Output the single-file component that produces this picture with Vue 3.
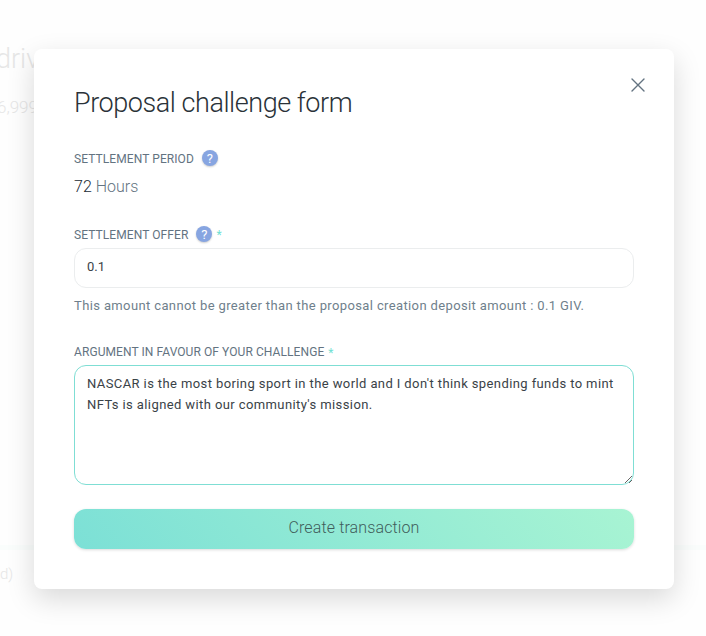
<script setup>
import { ref } from 'vue'

const offer = ref('0.1')
const argument = ref(
  "NASCAR is the most boring sport in the world and I don't think spending funds to mint NFTs is aligned with our community's mission."
)
</script>

<template>
  <div class="page">
    <div class="behind behind-title">driv</div>
    <div class="behind behind-amount">6,999</div>
    <div class="behind-line"></div>
    <div class="behind behind-note">d)</div>

    <section class="modal" role="dialog">
      <button class="close" aria-label="Close">
        <svg width="14" height="14" viewBox="0 0 14 14">
          <path d="M1 1L13 13M13 1L1 13" fill="none" stroke="#637381" stroke-width="1.4" stroke-linecap="round" />
        </svg>
      </button>

      <h1>Proposal challenge form</h1>

      <div class="label period-label">
        <span class="caption">SETTLEMENT PERIOD</span>
        <span class="help">?</span>
      </div>
      <div class="period"><b>72</b> Hours</div>

      <div class="label offer-label">
        <span class="caption">SETTLEMENT OFFER</span>
        <span class="help">?</span>
        <span class="star">*</span>
      </div>
      <input v-model="offer" class="field" type="text" />
      <p class="hint">This amount cannot be greater than the proposal creation deposit amount : 0.1 GIV.</p>

      <div class="label argument-label">
        <span>ARGUMENT IN FAVOUR OF YOUR CHALLENGE</span>
        <span class="star">*</span>
      </div>
      <textarea v-model="argument" class="field area" spellcheck="false"></textarea>

      <button class="submit">Create transaction</button>
    </section>
  </div>
</template>

<style>
body {
  background: #fefefe;
  overflow: hidden;
}
</style>

<style scoped>
.page {
  position: relative;
  box-sizing: border-box;
  width: 706px;
  height: 636px;
  padding: 49px 32px 47px 34px;
  overflow: hidden;
  background: #fefefe;
  font-family: Roboto, "Liberation Sans", sans-serif;
}
.behind {
  position: absolute;
  color: #e6e6e6;
  font-weight: 300;
  white-space: nowrap;
}
.behind-title { left: -4px; top: 43px; font-size: 27px; line-height: 32px; }
.behind-amount { left: -3px; top: 97px; font-size: 17px; line-height: 20px; }
.behind-note { left: 0; top: 565px; font-size: 15px; line-height: 18px; }
.behind-line {
  position: absolute;
  left: 0;
  right: 0;
  top: 545px;
  height: 5px;
  background: #fafdfc;
}
.modal {
  position: relative;
  box-sizing: border-box;
  width: 640px;
  height: 540px;
  padding: 36px 40px 40px;
  display: flex;
  flex-direction: column;
  border-radius: 8px;
  background: #fff;
  box-shadow: 0 10px 28px rgba(0, 0, 0, 0.15);
}
.close {
  position: absolute;
  top: 29px;
  right: 29px;
  width: 14px;
  height: 14px;
  padding: 0;
  border: 0;
  background: none;
}
.close svg { display: block; }
h1 {
  margin: 0;
  height: 36px;
  color: #2a3238;
  font-size: 27px;
  font-weight: 300;
  line-height: 36px;
  letter-spacing: -0.44px;
  white-space: nowrap;
}
.label {
  display: flex;
  align-items: center;
  height: 16px;
  color: #637381;
  font-size: 12px;
  line-height: 16px;
  letter-spacing: 0.08px;
  white-space: nowrap;
}
.caption { padding-top: 2px; }
.period-label { margin-top: 29px; }
.offer-label { margin-top: 27px; }
.argument-label { margin-top: 28px; }
.help {
  width: 16px;
  height: 16px;
  margin-left: 8px;
  border-radius: 50%;
  background: #87a5e1;
  box-shadow: 0 1px 2px rgba(0, 0, 0, 0.2);
  color: #fff;
  font-size: 13px;
  line-height: 17px;
  text-align: center;
}
.star {
  margin-left: 4px;
  padding-top: 2px;
  color: #71dfd2;
}
.period {
  height: 24px;
  margin-top: 9px;
  color: #637381;
  font-size: 16px;
  font-weight: 300;
  line-height: 24px;
}
.period b { color: #212b36; font-weight: 300; }
.field {
  box-sizing: border-box;
  width: 560px;
  height: 40px;
  margin: 6px 0 0;
  padding: 0 12px 3px;
  border: 1px solid #ebedee;
  border-radius: 12px;
  outline: 0;
  background: #fff;
  color: #3a4247;
  font-family: inherit;
  font-size: 13px;
  line-height: 21px;
}
.hint {
  height: 20px;
  margin: 8px 0 0;
  color: #6f7f8c;
  font-size: 13px;
  line-height: 20px;
  letter-spacing: 0.375px;
  white-space: nowrap;
}
.area {
  flex: none;
  height: 120px;
  margin-top: 5px;
  padding: 7px 12px;
  border-color: #7fded4;
  resize: vertical;
  letter-spacing: 0.4px;
}
.submit {
  height: 40px;
  margin-top: 24px;
  padding: 0 0 3px;
  border: 0;
  border-radius: 12px;
  background: linear-gradient(50deg, #7ce0d6, #a8f4d3);
  box-shadow: 0 1px 3px rgba(0, 0, 0, 0.15);
  color: #415d5b;
  font-family: inherit;
  font-size: 16px;
  font-weight: 300;
  letter-spacing: 0.12px;
}
</style>
